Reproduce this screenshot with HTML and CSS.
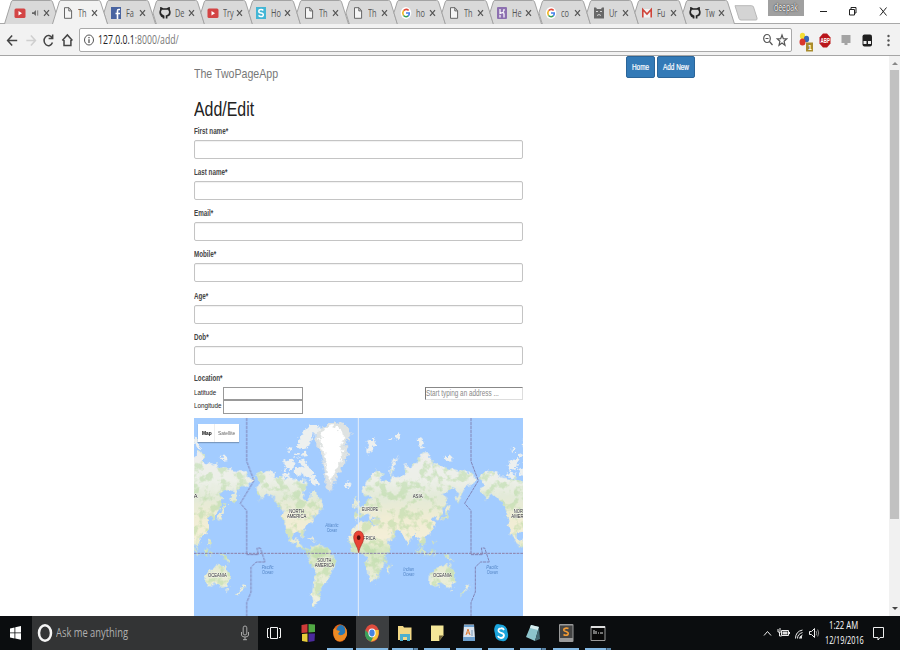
FILE: index.html
```html
<!DOCTYPE html>
<html lang="en">
<head>
<meta charset="utf-8">
<title>The TwoPageApp</title>
<link rel="stylesheet" href="styles.css">
</head>
<body>
<svg class="defs" aria-hidden="true">
  <defs>
    <symbol id="tab" viewBox="0 0 56 24" preserveAspectRatio="none"><path d="M.5 24L7.300 1.800Q7.700.5 9 .5H46.500Q48 .5 48.500 1.800L55.500 24"/></symbol>
    <symbol id="tabn" viewBox="0 0 56 24" preserveAspectRatio="none"><path d="M7.300 24L3.900 12.800 7.300 1.800Q7.700.5 9 .5H46.500Q48 .5 48.500 1.800L55.500 24"/></symbol>
    <symbol id="yt" viewBox="0 0 12 12"><rect x=".5" y="1.500" width="11" height="9.500" rx="1.500" fill="#d34545"/><path d="M4.500 4v4.500L8 6.200z" fill="#fff"/></symbol>
    <symbol id="file" viewBox="0 0 12 12"><path d="M2.500.7h4.500l2.600 3v7.600H2.500zM6.800.8v3.100h2.800" fill="#f5f5f5" stroke="#666" stroke-width="1"/></symbol>
    <symbol id="fb" viewBox="0 0 12 12"><rect x="1" width="10" height="12" fill="#4964a1"/><path d="M10 2.500H8.600Q7.500 2.500 7.500 4v8M5.500 6.500H10" fill="none" stroke="#fff" stroke-width="1.600"/></symbol>
    <symbol id="gh" viewBox="0 0 12 12"><path d="M4.600 11.500V9.600Q2.800 10 2.200 8.500M7.600 11.600V9Q11 8.500 10.800 5.200 10.800 4 10.200 3.300L10 1 8 2H4L2 1 1.800 3.300Q1.200 4 1.200 5.200 1.100 8.300 4.700 9" fill="none" stroke="#252525" stroke-width="1.700"/></symbol>
    <symbol id="sq" viewBox="0 0 12 12"><rect x="1" width="10" height="12" fill="#43b6d5"/><path d="M8.300 3.500Q7.600 2.500 6 2.500 3.800 2.500 3.800 4.200T6 6 8.300 7.800 6 9.500Q4.300 9.500 3.600 8.300" fill="none" stroke="#fff" stroke-width="1.500"/></symbol>
    <symbol id="goog" viewBox="0 0 12 12"><ellipse cx="6" cy="6" rx="5.300" ry="6" fill="#fff"/><path d="M8.700 3.400Q6 1.200 3.600 3.600" fill="none" stroke="#e24a3b" stroke-width="1.500"/><path d="M3.600 3.500Q2 6 3.500 8.500" fill="none" stroke="#f0b51e" stroke-width="1.500"/><path d="M3.500 8.500Q5.800 10.700 8.300 8.800" fill="none" stroke="#35a055" stroke-width="1.500"/><path d="M8.200 8.900Q9.500 7.700 9.300 6H6" fill="none" stroke="#4380ea" stroke-width="1.500"/></symbol>
    <symbol id="her" viewBox="0 0 12 12"><rect x="1" width="10" height="12" rx="1" fill="#8d70b0"/><path d="M4 2v4.500Q8 4.500 8 7v3.500M8 2v1.500L7 4.700M4 8v2.500" fill="none" stroke="#fff" stroke-width="1.200"/></symbol>
    <symbol id="cat" viewBox="0 0 12 12"><path d="M1 .5h2l1 1.500h4l1-1.500h2v11H1z" fill="#686868"/><path d="M3 4.500h2M7 4.500h2M4 8.500q2-2 4 0" stroke="#d4d4d4" fill="none"/></symbol>
    <symbol id="gmail" viewBox="0 0 12 12"><path d="M1 2h10v8.500H1z" fill="#f2f2f2"/><path d="M1.800 10.500V2.500L6 7l4.200-4.500v8" fill="none" stroke="#cf4439" stroke-width="1.600"/></symbol>
    <symbol id="x" viewBox="0 0 7 8"><path d="M1 1.200l5 5.600M6 1.200L1 6.800" stroke="#555" stroke-width="1.200"/></symbol>
  </defs>
</svg>

<header class="tabs">
  <div class="tab"><svg class="shape"><use href="#tab"/></svg><svg class="fav"><use href="#yt"/></svg><svg class="speaker" viewBox="0 0 8 8"><path d="M0 3h2l2.500-2.500v7L2 5H0z" fill="#666"/><path d="M6.500 1v6" stroke="#777"/></svg><svg class="close"><use href="#x"/></svg></div>
  <div class="tab active"><svg class="shape"><use href="#tab"/></svg><svg class="fav"><use href="#file"/></svg><span class="name"><span class="sx">Th</span></span><svg class="close"><use href="#x"/></svg></div>
  <div class="tab"><svg class="shape"><use href="#tabn"/></svg><svg class="fav"><use href="#fb"/></svg><span class="name"><span class="sx">Fa</span></span><svg class="close"><use href="#x"/></svg></div>
  <div class="tab"><svg class="shape"><use href="#tabn"/></svg><svg class="fav"><use href="#gh"/></svg><span class="name"><span class="sx">De</span></span><svg class="close"><use href="#x"/></svg></div>
  <div class="tab"><svg class="shape"><use href="#tabn"/></svg><svg class="fav"><use href="#yt"/></svg><span class="name"><span class="sx">Try</span></span><svg class="close"><use href="#x"/></svg></div>
  <div class="tab"><svg class="shape"><use href="#tabn"/></svg><svg class="fav"><use href="#sq"/></svg><span class="name"><span class="sx">Ho</span></span><svg class="close"><use href="#x"/></svg></div>
  <div class="tab"><svg class="shape"><use href="#tabn"/></svg><svg class="fav"><use href="#file"/></svg><span class="name"><span class="sx">Th</span></span><svg class="close"><use href="#x"/></svg></div>
  <div class="tab"><svg class="shape"><use href="#tabn"/></svg><svg class="fav"><use href="#file"/></svg><span class="name"><span class="sx">Th</span></span><svg class="close"><use href="#x"/></svg></div>
  <div class="tab"><svg class="shape"><use href="#tabn"/></svg><svg class="fav"><use href="#goog"/></svg><span class="name"><span class="sx">ho</span></span><svg class="close"><use href="#x"/></svg></div>
  <div class="tab"><svg class="shape"><use href="#tabn"/></svg><svg class="fav"><use href="#file"/></svg><span class="name"><span class="sx">Th</span></span><svg class="close"><use href="#x"/></svg></div>
  <div class="tab"><svg class="shape"><use href="#tabn"/></svg><svg class="fav"><use href="#her"/></svg><span class="name"><span class="sx">He</span></span><svg class="close"><use href="#x"/></svg></div>
  <div class="tab"><svg class="shape"><use href="#tabn"/></svg><svg class="fav"><use href="#goog"/></svg><span class="name"><span class="sx">co</span></span><svg class="close"><use href="#x"/></svg></div>
  <div class="tab"><svg class="shape"><use href="#tabn"/></svg><svg class="fav"><use href="#cat"/></svg><span class="name"><span class="sx">Ur</span></span><svg class="close"><use href="#x"/></svg></div>
  <div class="tab"><svg class="shape"><use href="#tabn"/></svg><svg class="fav"><use href="#gmail"/></svg><span class="name"><span class="sx">Fu</span></span><svg class="close"><use href="#x"/></svg></div>
  <div class="tab"><svg class="shape"><use href="#tabn"/></svg><svg class="fav"><use href="#gh"/></svg><span class="name"><span class="sx">Tw</span></span><svg class="close"><use href="#x"/></svg></div>
  <svg class="newtab" viewBox="0 0 24 16"><path d="M1 .7h16.500q1.500 0 2 1.300l3.500 11q.5 2-1 2H7q-1.500 0-2-1.500z" fill="#d4d4d4" stroke="#b8b8b8"/></svg>
  <div class="user"><span class="sx">deepak</span></div>
  <svg class="winbtns" viewBox="0 0 80 24"><path d="M8 11.500h7" stroke="#222"/><path d="M37.500 9.500h5v5.500h-5zM39 9V7.500h5V13h-1" fill="none" stroke="#222"/><path d="M68 7.500l6.500 8M74.500 7.500l-6.500 8" stroke="#222"/></svg>
</header>

<div class="toolbar">
  <svg class="nav" viewBox="0 0 78 30"><g fill="none" stroke="#454545" stroke-width="1.500"><path d="M17 15H8M12 10l-4.500 5 4.500 5"/><path d="M26 15h8M30.500 10l4.500 5-4.500 5" stroke="#cfcfcf"/><path d="M51.500 12.500A4.300 5 0 1 0 51.800 17M52 9v4h-4"/><path d="M61.500 15l5-5.500 5 5.500M63.200 14.500V20H70v-5.500"/></g></svg>
  <div class="address">
    <svg class="info" viewBox="0 0 12 12"><g fill="none" stroke="#555"><ellipse cx="6" cy="6" rx="4.500" ry="5"/><path d="M6 5.200v3.800M6 3v1.200" stroke-width="1.300"/></g></svg>
    <span class="url"><span class="sx">127.0.0.1<span class="path">:8000/add/</span></span></span>
    <svg class="addricons" viewBox="0 0 26 14"><g fill="none" stroke="#555" stroke-width="1.200"><ellipse cx="5" cy="5.500" rx="3.300" ry="4"/><path d="M7.500 8.500l3 3.500M3.500 5.500h3"/><path d="M20 2l1.300 3.600 3.500.2-2.700 2.500.9 3.900-3-2.200-3 2.200.9-3.900-2.700-2.500 3.500-.2z"/></g></svg>
  </div>
  <svg class="exts" viewBox="0 0 108 30"><ellipse cx="10.500" cy="10.500" rx="2.600" ry="3.200" fill="#f3dd35"/><ellipse cx="14.500" cy="13.500" rx="2.600" ry="3.200" fill="#3567b9"/><ellipse cx="10.500" cy="16.500" rx="3" ry="3.600" fill="#d9362d"/><rect x="14" y="17" width="7" height="9" fill="#a88b2c"/><text x="16" y="24.500" class="badge">1</text><path d="M31 8h4l3.500 4v6l-3.500 4h-4l-3.500-4v-6z" fill="#b9161b"/><text x="28.500" y="17.800" class="abp" textLength="9.500" lengthAdjust="spacingAndGlyphs">ABP</text><path d="M49.500 9.500h9v8h-3v2h-3v-2h-3z" fill="#a4a4a4"/><rect x="70.500" y="9" width="9.500" height="12" rx="2" fill="#202020"/><path d="M71.500 15.500h3v3h-3zM76 15.500h3v3h-3z" fill="#eee"/><g fill="#555"><circle cx="96.500" cy="10.500" r="1.200"/><circle cx="96.500" cy="15" r="1.200"/><circle cx="96.500" cy="19.500" r="1.200"/></g></svg>
</div>

<div class="viewport">
  <main class="container">
    <div class="brandbar">
      <h3><span class="sx">The TwoPageApp</span></h3>
      <nav><a class="btn home"><span class="sx">Home</span></a><a class="btn add"><span class="sx">Add New</span></a></nav>
    </div>
    <form class="form">
      <h1><span class="sx">Add/Edit</span></h1>
      <div class="group"><label><span class="sx">First name*</span></label><div class="control"></div></div>
      <div class="group"><label><span class="sx">Last name*</span></label><div class="control"></div></div>
      <div class="group"><label><span class="sx">Email*</span></label><div class="control"></div></div>
      <div class="group"><label><span class="sx">Mobile*</span></label><div class="control"></div></div>
      <div class="group"><label><span class="sx">Age*</span></label><div class="control"></div></div>
      <div class="group"><label><span class="sx">Dob*</span></label><div class="control"></div></div>
      <label><span class="sx">Location*</span></label>
      <div class="location">
        <div class="coords">
          <span class="cl"><span class="sx">Latitude</span></span><div class="plain"></div>
          <span class="cl"><span class="sx">Longitude</span></span><div class="plain"></div>
        </div>
        <div class="search"><span class="sx">Start typing an address ...</span></div>
      </div>
      <div class="mapbox">
        <svg class="map" viewBox="12 9 987 594" preserveAspectRatio="none">
          <defs>
            <filter id="coast" filterUnits="userSpaceOnUse" x="0" y="0" width="1010" height="610" color-interpolation-filters="sRGB">
              <feTurbulence type="fractalNoise" baseFrequency=".055" numOctaves="3" seed="4" result="n"/>
              <feDisplacementMap in="SourceGraphic" in2="n" scale="26" xChannelSelector="R" yChannelSelector="G" result="land"/>
              <feTurbulence type="fractalNoise" baseFrequency=".035" numOctaves="4" seed="12"/>
              <feColorMatrix values="0 0 0 0 .68  0 0 0 0 .84  0 0 0 0 .60  6 0 0 0 -2.900" result="green"/>
              <feComposite in="green" in2="land" operator="in" result="g"/>
              <feComponentTransfer in="g" result="gs"><feFuncA type="linear" slope=".45"/></feComponentTransfer>
              <feMerge><feMergeNode in="land"/><feMergeNode in="gs"/></feMerge>
            </filter>
            <filter id="ice" filterUnits="userSpaceOnUse" x="0" y="0" width="1010" height="610" color-interpolation-filters="sRGB">
              <feTurbulence type="fractalNoise" baseFrequency=".08" numOctaves="3" seed="7" result="n"/>
              <feDisplacementMap in="SourceGraphic" in2="n" scale="26" xChannelSelector="R" yChannelSelector="G"/>
            </filter>
            <linearGradient id="zones" gradientUnits="userSpaceOnUse" x1="0" y1="120" x2="0" y2="540">
              <stop offset="0" stop-color="#eeeeec"/><stop offset=".18" stop-color="#edf0e9"/><stop offset=".3" stop-color="#e3ead8"/><stop offset=".45" stop-color="#f0edd4"/><stop offset=".6" stop-color="#f5efd8"/><stop offset=".68" stop-color="#d3e6c0"/><stop offset=".8" stop-color="#e6ebd3"/><stop offset="1" stop-color="#eff0dc"/>
            </linearGradient>
            <g id="world-land" fill="url(#zones)">
              <path d="M196 178l19-8 25 5 22 9 23 4 20 2 20 10 20-5 7 20-12 20-2 15 14 12 8-12 2-18 16 0 7 18 13 18 2 12-15 10 3 10-18 5-8 13-7 12-10 15-8 6 4 14-8-2-8-12-17 2-2 15 9 10 13-7 0 10 10 7 7 13 13 7 8-1-2 6-10 2-15-13-20-11-15-9-10-20-7-15-7-20-4-22 3-18-13-18-17-22-17-8-16 13-12 7 12-12-12-12-5-18 10-10z"/>
              <path d="M362 395l13-7 25 4 12 10 13 16 13 12v15l-10 17-3 18-17 12-8 18-10 15-5 20-7 15 4 14-12-6-4-28 4-40 4-30-14-25-6-20 6-15z"/>
              <path d="M500 322l35-2 15 10 22 2 10 23 10 30 11 3-3 17-17 20-1 25-12 20-8 20-12 15-10-3-8-22-4-30 2-15-10-15-15-8-15-2-12-15-2-25 9-25z"/>
              <path d="M592 454l7-8 1 12-5 22-7-3z"/>
              <path d="M350 366l20 3 13 9-15-3z"/>
              <g transform="translate(495)">
                <path d="M2 315V295l13-3-5-14 15-10 10-10 12-4 5-14-14 5-12 3-6-22 10-20 15-24 17-15 23 10-3 20 23 5 5-15 30-2 10-13-2-20 12-5 5 10 20-20 20-28 17 10 3 23 25 7 30 8 30 10 35 8 25 20-15 12-15 5-15 10-7 20-10 23-6-13 8-23-20-7-15 10-13 5 13 18-3 22-14 20-6 20-7-5-7-10-10 10 10 20-6 17-14 13-13 3 5 17-10 7 8 18-13-15-5-20-10-20-12 20-8 20-10-25-10-18-20-2-5 5 5 10-20 20-8-5-14-30-3-15-25-10 5-8 20-2-20-6-8 10-10-18-7 5-10-5-10 12z"/>
                <path d="M-6 272l8-25 8 12 3 17-16 4zM108 188l-2-28 10-22 15-15 4 5-15 20-8 35z"/>
                <path d="M270 298l6-18 5-12 6 0-5 22-11 20-11 9zM232 375l7 0 1 16-6-4zM192 398l20 24-8 2-14-20zM217 408l14-9 1 14-12 8zM213 426l20 3M262 415l26 9 7 14-17-7zM236 410l8 0-2 15z"/>
                <path d="M228 475l17-15 17-10h13l5 12 5-15 7 18 8 20-5 20-10 13-10-3-15-10-20 7-14-2zM287 522l6 2-5 9zM336 507l10 5-7 10-12 18-6-2 12-15z"/>
              </g>
            </g>
            <g id="world-ice" fill="#edf0ef">
              <path d="M322 90l13-35 25-25 25 0 5 15-25 25-15 30-20 5z"/>
              <path d="M278 145l17-15 20 10-5 20-22 6zM310 165l20-10 10 13-18 15zM336 178l-6-45 12-5 15 30 18 22 12 35-15-5-15-20zM290 100l12-7 5 14-12 5zM310 118l12-3 5 10-14 3zM282 172l20 4-5 14-20-4zM335 115l16-2 3 10-15 2zM462 206l12-4 7 6-8 10z"/>
              <path fill="#dfe3e2" d="M372 75l13-30 25-15 30-12 30 12 15 27-15 23 2 40-12 30-18 30-12 35-10 19-10-19-5-35-5-30-10-40z"/>
              <path fill="#fff" d="M388 78l12-35 30-10 22 12 10 25-8 25 5 30-18 30-15 30-5 22-10-32-8-60z"/>
              <path d="M530 90l8-18 15 0 2 15-10 22-7 8zM592 70l16-2-1 5-14 6zM615 62l12-6 2 14-10 4zM680 75l10-10 8 18 8 20-10-3zM762 125l18 0 8 10-18 3z"/>
            </g>
            <g id="world-lines" fill="none" stroke="#8184b6" stroke-width="3" stroke-dasharray="10 2">
              <path d="M170 9v130l22 58-41 68 19 22v132h35l-4-20 10 0 14 42h-26l-16 15v75l-13 32v40"/>
            </g>
          </defs>
          <path fill="#a3ccff" d="M12 9h987v594H12z"/>
          <g filter="url(#coast)"><use href="#world-land"/><use href="#world-land" x="-673"/><use href="#world-land" x="673"/></g>
          <g filter="url(#ice)"><use href="#world-ice"/><use href="#world-ice" x="-673"/><use href="#world-ice" x="673"/></g>
          <use href="#world-lines"/><use href="#world-lines" x="673"/>
          <path d="M12 415h987" stroke="#8d7fa6" stroke-width="3" stroke-dasharray="8 3"/>
          <path d="M505 9v594" stroke="#e6eef8" stroke-width="3"/>
          <g class="places" text-anchor="middle">
            <text x="320" y="294" textLength="44" lengthAdjust="spacingAndGlyphs">NORTH</text><text x="320" y="310" textLength="58" lengthAdjust="spacingAndGlyphs">AMERICA</text>
            <text x="403" y="441" textLength="42" lengthAdjust="spacingAndGlyphs">SOUTH</text><text x="403" y="457" textLength="58" lengthAdjust="spacingAndGlyphs">AMERICA</text>
            <text x="82" y="485" textLength="56" lengthAdjust="spacingAndGlyphs">OCEANIA</text><text x="757" y="485" textLength="56" lengthAdjust="spacingAndGlyphs">OCEANIA</text>
            <text x="683" y="250" textLength="30" lengthAdjust="spacingAndGlyphs">ASIA</text><text x="540" y="287" textLength="48" lengthAdjust="spacingAndGlyphs">EUROPE</text>
            <text x="534" y="376" textLength="46" lengthAdjust="spacingAndGlyphs">AFRICA</text><text x="17" y="249">A</text>
            <text x="993" y="294" textLength="44" lengthAdjust="spacingAndGlyphs">NORTH</text><text x="993" y="310" textLength="58" lengthAdjust="spacingAndGlyphs">AMERICA</text>
          </g>
          <g class="oceans" text-anchor="middle">
            <text x="426" y="337" textLength="40" lengthAdjust="spacingAndGlyphs">Atlantic</text><text x="426" y="350" textLength="32" lengthAdjust="spacingAndGlyphs">Ocean</text>
            <text x="233" y="463" textLength="36" lengthAdjust="spacingAndGlyphs">Pacific</text><text x="233" y="476" textLength="34" lengthAdjust="spacingAndGlyphs">Ocean</text>
            <text x="656" y="469" textLength="32" lengthAdjust="spacingAndGlyphs">Indian</text><text x="656" y="482" textLength="34" lengthAdjust="spacingAndGlyphs">Ocean</text>
            <text x="907" y="463" textLength="36" lengthAdjust="spacingAndGlyphs">Pacific</text><text x="907" y="476" textLength="34" lengthAdjust="spacingAndGlyphs">Ocean</text>
          </g>
          <path d="M506 413C503 392 491 385 491 367Q492 349 506 348 520 349 521 367C521 385 509 392 506 413z" fill="#ea4335" stroke="#a52b22" stroke-width="2"/><ellipse cx="506" cy="368" rx="5.500" ry="7" fill="#54100e"/>
        </svg>
        <div class="maptype"><span class="on"><span class="sx">Map</span></span><span class="sat"><span class="sx">Satellite</span></span></div>
      </div>
    </form>
  </main>
  <div class="scroll"><i class="up"></i><b></b><i class="down"></i></div>
</div>

<footer class="taskbar">
  <svg class="start" viewBox="0 0 32 34"><path d="M10 12.500l4.500-1v5H10zM15.300 11.300l5.700-1.200v6.400h-5.700zM10 17.300h4.500v5.200l-4.500-1zM15.300 17.300H21v6.500l-5.700-1.200z" fill="#fff"/></svg>
  <div class="cortana"><svg class="ring" viewBox="0 0 16 20"><ellipse cx="8" cy="10" rx="6" ry="7.700" fill="none" stroke="#f5f5f5" stroke-width="2.500"/></svg><span class="ask"><span class="sx">Ask me anything</span></span><svg class="mic" viewBox="0 0 10 16"><g fill="none" stroke="#aaa"><rect x="3.200" y="1" width="3.600" height="9" rx="1.800"/><path d="M1.500 7v3Q1.500 12 5 12t3.500-2V7M5 12v3M3 14.700h4"/></g></svg></div>
  <svg class="view" viewBox="0 0 32 34"><path d="M12.500 11.500h7v11h-7zM11 12.500H9.500v9H11M21 12.500h1.500v9H21" fill="none" stroke="#f4f4f4"/></svg>
  <div class="apps">
    <div class="app idle"><svg viewBox="0 0 16 20"><path d="M1.500 2l6-1v8.500l-6 .5z" fill="#ce3b38"/><path d="M8.500 1l6.500.5v7.500l-6.500.5z" fill="#51a944"/><path d="M2 11l5.500-.5v8.500L2 18z" fill="#e6cc3b"/><path d="M8.500 10.500H15l-.5 7.500-6 1z" fill="#4b2a9d"/></svg></div>
    <div class="app"><svg viewBox="0 0 16 20"><ellipse cx="8" cy="10" rx="7" ry="8.700" fill="#e0661b"/><ellipse cx="9" cy="8" rx="4.500" ry="6" fill="#2878b5"/><path d="M1.500 6Q4 4 4 7l4 1-2 3q3 3 7-1 1-4-1-7 5 5 2 11-3 5-8 4-5-2-4.500-12z" fill="#ed8b24"/></svg></div>
    <div class="app current"><svg viewBox="0 0 16 20"><ellipse cx="8" cy="10" rx="7" ry="8.700" fill="#de4c3e"/><path d="M1.300 7Q-.5 16 7 18.700L10 12H6z" fill="#39a05a"/><path d="M9 7h5.700Q16 17 7 18.700L11 11z" fill="#f4c437"/><ellipse cx="8" cy="10" rx="3.600" ry="4.400" fill="#fff"/><ellipse cx="8" cy="10" rx="2.700" ry="3.400" fill="#4584e0"/></svg></div>
    <div class="app stack"><svg viewBox="0 0 16 20"><path d="M1 3h5l1 1.500h7.500V17H1z" fill="#f2d886"/><path d="M3 11h10v7h-3v-4H6v4H3z" fill="#4db0cf"/></svg></div>
    <div class="app"><svg viewBox="0 0 16 20"><path d="M2 2.500h12.500v10l-4.500 5.500H2z" fill="#f5e798"/><path d="M10 12.500h4.500L10 18z" fill="#706339"/></svg></div>
    <div class="app"><svg viewBox="0 0 16 20"><path d="M3 1.500h10l1 14H2z" fill="#dbe4ef"/><path d="M3 2h10v2H3zM2 14h12v4H2z" fill="#6d9fcd"/><path d="M5 12l2-6 2 6M6 10h2" fill="none" stroke="#df7b31"/><path d="M10 8h2M10 10h2M10 12h2" stroke="#7897b6"/></svg></div>
    <div class="app"><svg viewBox="0 0 16 20"><path d="M3 1.500q2-1 4 0 7 0 7.500 7.500 1.500 4-.5 7-2 3-5 2-7 0-7-7Q0 5 3 1.500z" fill="#1ba4dc"/><path d="M11 7Q10 5 8 5.300 5 5.500 5.500 8 6 9.500 8 9.800 11 10.300 11 12.500 10.500 15 8 15 5.500 14.800 5 13" fill="none" stroke="#fff" stroke-width="1.800"/></svg></div>
    <div class="app stack"><svg viewBox="0 0 16 20"><path d="M6 2l8 2-4 14-9-4z" fill="#8dc4cc"/><path d="M6 2l8 2-1 3-8-2z" fill="#d9eef0"/><path d="M14 4l1 12-5 2z" fill="#466b75"/></svg></div>
    <div class="app"><svg viewBox="0 0 16 20"><rect x="1" y="1" width="14.500" height="18" rx="1" fill="#9a9a9a"/><rect x="2" y="2.500" width="12.500" height="12.500" fill="#444"/><path d="M10.500 5.500Q8 4.500 6 6q-1 2 2 2.500 3 1 2 3-2 1.500-4.500 0" fill="none" stroke="#f39b33" stroke-width="1.600"/></svg></div>
    <div class="app stack"><svg viewBox="0 0 16 20"><path d="M1 3.500h14v14H1z" fill="#080808" stroke="#999"/><path d="M1 4h14" stroke="#ddd" stroke-width="2"/><path d="M3 8h2M3 10h2M6 8v3M8 10h1M10 10h3" stroke="#ddd"/></svg></div>
  </div>
  <svg class="tray" viewBox="0 0 60 34"><g fill="none" stroke="#eee"><path d="M4 19.500l3.500-4 3.500 4"/><path d="M21.500 14.500h7v5h-7zM29.500 16v2M18 13v3h3M20 12v3M19.500 16v4h2"/><path d="M35.500 22.500q0-7 7-8.500M37.500 22.500q0-4.500 5-6M39.500 22.500q0-2 3-3.500"/><path d="M49.500 15.500h2l3-3v9l-3-3h-2z"/><path d="M56 15q1.500 2 0 4.500M57.700 13.500q2 3.500 0 7" stroke="#888"/></g><path d="M22.500 15.500h5v3h-5zM40 20h2v2.500h-2z" fill="#ddd"/></svg>
  <div class="clock"><span class="time"><span class="sx">1:22 AM</span></span><span class="date"><span class="sx">12/19/2016</span></span></div>
  <svg class="note" viewBox="0 0 30 34"><path d="M6.500 11.500h10v10h-3.500l-2 2.500v-2.500H6.500z" fill="none" stroke="#eee"/></svg>
</footer>
</body>
</html>
```
FILE: styles.css
```css
* { box-sizing: border-box; }
body { margin: 0; width: 900px; height: 650px; overflow: hidden; background: #fff; font-family: "Liberation Sans", Arial, sans-serif; color: #333; display: flex; flex-direction: column; }
.defs { position: absolute; width: 0; height: 0; }
svg { display: block; flex: none; }
.sx { display: inline-block; white-space: nowrap; transform: scaleX(.78); transform-origin: 0 50%; }

/* tab strip */
.tabs { height: 24px; flex: none; display: flex; padding-left: 4px; background: #fff; border-bottom: 1px solid #a9a9a9; position: relative; font-family: "Open Sans", "Noto Sans", sans-serif; }
.tab { position: relative; flex: none; width: 56px; height: 24px; margin-right: -7.77px; display: flex; align-items: center; padding: 1px 0 0 10px; }
.shape { position: absolute; left: 0; top: 0; width: 56px; height: 24px; fill: #d9d9d9; stroke: #a3a3a3; stroke-width: 1; }
.active { z-index: 2; }
.active .shape { fill: #f2f2f2; }
.fav { position: relative; width: 12px; height: 12px; }
.name { position: relative; width: 9px; margin-left: 4px; font-size: 10.5px; line-height: 16px; color: #555; }
.name .sx { transform: scaleX(.7); }
.speaker { position: relative; width: 7px; height: 8px; margin-left: 6px; }
.close { position: relative; width: 7px; height: 8px; margin-left: 4px; }
.newtab { width: 24px; height: 16px; margin: 5px 0 0 6px; }
.user { width: 36px; height: 16px; margin-left: 10px; padding-left: 6px; background: #a0a0a0; color: #fff; font-size: 10px; line-height: 15px; text-shadow: 0 0 2px #222, 0 0 1px #333; }
.user .sx { transform: scaleX(.69); }
.winbtns { width: 80px; height: 24px; margin-left: 8px; }

/* toolbar */
.toolbar { height: 32px; flex: none; display: flex; align-items: flex-start; background: #f2f2f2; border-bottom: 1px solid #a6a6a6; }
.nav { width: 79px; height: 31px; margin-top: 1px; }
.address { width: 713px; height: 24px; margin-top: 4px; display: flex; align-items: center; background: #fff; border: 1px solid #a9a9a9; border-radius: 2px; padding: 0 3px 0 3px; }
.info { width: 12px; height: 12px; }
.url { margin-left: 3px; font: 12px/18px "Open Sans", "Noto Sans", sans-serif; color: #222; width: 120px; }
.url .sx { transform: scaleX(.725); }
.path { color: #777; }
.addricons { width: 26px; height: 14px; margin-left: auto; }
.exts { width: 108px; height: 31px; margin-top: 1px; }
.badge { font-size: 7px; font-weight: bold; fill: #fff; }
.abp { font-size: 7px; font-weight: bold; fill: #fff; }

/* page */
.viewport { height: 560px; flex: none; display: flex; overflow: hidden; }
.container { width: 501px; margin-left: 194px; flex: none; }
.brandbar { height: 41px; display: flex; justify-content: space-between; align-items: flex-start; }
h3 { margin: 9px 0 0; font-size: 13.6px; line-height: 18px; font-weight: normal; color: #777; }
nav { display: flex; gap: 2px; }
.btn { height: 22px; padding-top: 1px; background: #337ab7; border: 1px solid #2b6599; border-radius: 2px; color: #fff; font-size: 8.2px; line-height: 19px; -webkit-text-stroke: .2px #fff; }
.home { width: 29px; padding-left: 5px; }
.add { width: 38px; padding-left: 5px; }
.form { width: 329px; }
h1 { margin: 0 0 2px; height: 25px; font-size: 20.4px; line-height: 25px; font-weight: normal; color: #222; }
label { display: block; height: 16px; font-size: 8.3px; line-height: 15px; font-weight: bold; color: #444; }
label .sx { transform: scaleX(.755); }
.group { height: 41.17px; }
.control { height: 19px; border: 1px solid #c4c4c4; border-radius: 2px; box-shadow: inset 0 1px 1px rgba(0,0,0,.06); }
.location { display: flex; justify-content: space-between; height: 31px; }
.coords { display: grid; grid-template-columns: 29px 80px; grid-auto-rows: 13.5px; font-size: 8px; line-height: 12px; color: #222; }
.cl { width: 29px; }
.plain { border: 1px solid #999; }
.search { width: 98px; height: 13px; border: 1px solid #ddd; border-left-color: #777; border-top-color: #888; font-size: 8.2px; line-height: 12px; color: #888; }
.mapbox { position: relative; width: 329px; height: 198px; overflow: hidden; }
.map { width: 329px; height: 198px; }
.places { font-size: 17px; fill: #222; stroke: #fff; stroke-width: 2px; paint-order: stroke; }
.oceans { font-size: 14px; font-style: italic; fill: #5586c6; }
.maptype { position: absolute; left: 4px; top: 6px; width: 41px; height: 18px; background: #fff; box-shadow: 0 1px 1px rgba(0,0,0,.25); display: flex; font-size: 6.2px; line-height: 17px; }
.on { width: 17px; padding-left: 4px; height: 18px; color: #000; font-weight: bold; border-right: 1px solid #eee; }
.sat { padding-left: 3px; width: 24px; color: #666; }
.scroll { margin-left: auto; width: 11px; height: 560px; background: #f1f1f1; display: flex; flex-direction: column; align-items: center; }
.scroll b { width: 9px; height: 449px; background: #c1c1c1; margin-top: 8px; }
.up { margin-top: 6px; margin-bottom: -3px; border: 3px solid transparent; border-top: 0; border-bottom: 3px solid #888; }
.down { margin-top: auto; margin-bottom: 6px; border: 3px solid transparent; border-bottom: 0; border-top: 3px solid #444; }

/* taskbar */
.taskbar { height: 34px; flex: none; display: flex; background: #0b0d0f; color: #fff; font-family: "Open Sans", "Noto Sans", sans-serif; }
.start { width: 32px; height: 34px; }
.cortana { width: 226px; height: 34px; background: #333435; display: flex; align-items: center; padding-left: 5px; }
.ring { width: 16px; height: 20px; }
.ask { margin-left: 3px; width: 180px; font-size: 12px; line-height: 18px; color: #b0b0b0; }
.mic { width: 10px; height: 16px; margin-left: 4px; }
.view { width: 32px; height: 34px; }
.apps { display: flex; margin-left: 2px; }
.app { width: 32.2px; height: 34px; padding: 7px 0 0 8px; background: linear-gradient(#84b9e4, #84b9e4) 3px 32px / 26px 2px no-repeat; }
.app svg { width: 16px; height: 20px; }
.idle { background: none; }
.current { background: linear-gradient(#84b9e4, #84b9e4) 0 32px / 32px 2px no-repeat, #3c3e40; }
.stack { background: linear-gradient(90deg, #84b9e4 21px, #36536b 21px 22px, #5b86a9 22px) 3px 32px / 26px 2px no-repeat; }
.tray { width: 60px; height: 34px; margin-left: auto; }
.clock { width: 42px; margin-left: 3px; font-size: 10.3px; line-height: 15px; padding: 2px 0 0 1px; }
.time, .date { display: block; }
.time { padding-left: 4px; }
.time .sx { transform: scaleX(.75); }
.date .sx { transform: scaleX(.71); }
.note { width: 30px; height: 34px; margin-left: 2px; margin-right: 3px; }
.clock .sx { position: relative; left: 1px; }
```
